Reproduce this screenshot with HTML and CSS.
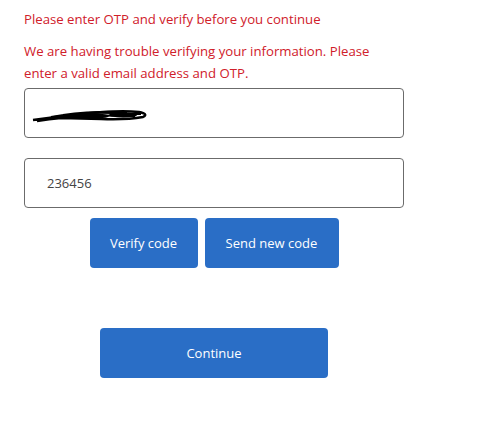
FILE: index.html
```html
<!DOCTYPE html>
<html lang="en">
<head>
  <meta charset="UTF-8" />
  <meta name="viewport" content="width=device-width, initial-scale=1" />
  <title>Verify email</title>
  <link rel="stylesheet" href="styles.css">
</head>
<body>
  <div class="form">
    <p class="error">Please enter OTP and verify before you continue</p>
    <p class="error last">We are having trouble verifying your information. Please enter a valid email address and OTP.</p>

    <div class="field email">
      <svg class="scribble" width="130" height="20" viewBox="0 0 130 20">
        <path d="M2 15 L40 10 L60 8 Q90 5 108 7 Q118 9 112 12 Q95 15 70 14 L30 13 Q18 14 6 16" fill="none" stroke="#000" stroke-width="2.5"/>
        <path d="M20 12 Q50 7 80 8 Q100 9 110 9 M40 11 Q70 10 104 11 M32 10 Q60 6 96 7" fill="none" stroke="#000" stroke-width="2"/>
        <ellipse cx="56" cy="11" rx="22" ry="3" fill="#000"/>
        <ellipse cx="92" cy="10" rx="14" ry="2.5" fill="#000"/>
      </svg>
    </div>

    <div class="field">236456</div>

    <div class="actions">
      <button class="btn">Verify code</button>
      <button class="btn wide">Send new code</button>
    </div>

    <div class="continue">
      <button class="btn big">Continue</button>
    </div>
  </div>
</body>
</html>
```

FILE: styles.css
```css
body {
  margin: 0;
  font-family: 'Open Sans', sans-serif;
  background: #fff;
  color: #333;
}

.form {
  width: 380px;
  margin-left: 24px;
  padding-top: 8px;
}

.error {
  color: #d0202a;
  font-size: 13.2px;
  line-height: 22px;
  margin: 0 0 10px;
  max-width: 360px;
}

.error.last {
  margin-bottom: 4px;
}

.field {
  box-sizing: border-box;
  height: 50px;
  border: 1px solid #6b6b6b;
  border-radius: 4px;
  margin-bottom: 20px;
  padding-left: 22px;
  display: flex;
  align-items: center;
  font-size: 13px;
  color: #444;
}

.email {
  padding-left: 6px;
}

.scribble {
  margin-top: 4px;
}

.actions {
  display: flex;
  justify-content: center;
  gap: 7px;
  margin-top: -10px;
}

.btn {
  height: 50px;
  width: 108px;
  border: none;
  border-radius: 4px;
  background: #2a6ec6;
  color: #fff;
  font-family: 'Open Sans', sans-serif;
  font-size: 13px;
}

.wide { width: 134px; }

.continue {
  display: flex;
  justify-content: center;
  margin-top: 60px;
}

.big { width: 228px; }
```
